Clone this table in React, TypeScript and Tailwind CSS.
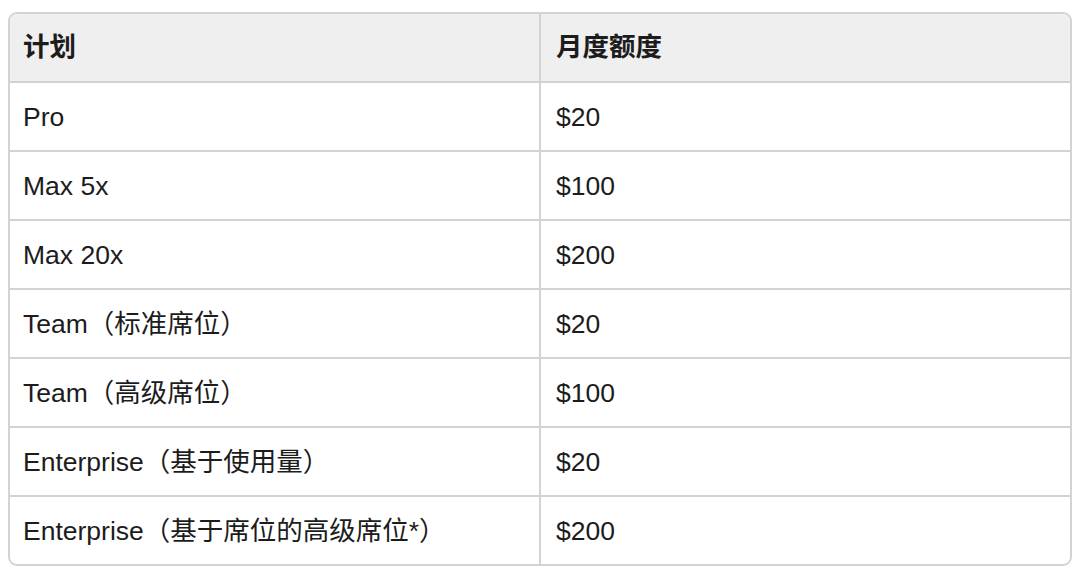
import React from "react";

const rows: [string, string][] = [
  ["Pro", "$20"],
  ["Max 5x", "$100"],
  ["Max 20x", "$200"],
  ["Team（标准席位）", "$20"],
  ["Team（高级席位）", "$100"],
  ["Enterprise（基于使用量）", "$20"],
  ["Enterprise（基于席位的高级席位*）", "$200"],
];

export default function App() {
  return (
    <div
      className="w-[1080px] h-[575px] bg-white pt-[12px] pl-[8px] pr-[8px]"
      style={{ fontFamily: '"Liberation Sans", "Noto Sans CJK SC", sans-serif' }}
    >
      <div className="w-[1064px] rounded-[9px] border-[2px] border-[#d3d3d3] overflow-hidden text-[#1c1c1c] text-[26.5px]">
        <div className="grid grid-cols-[531px_1fr] h-[67px] bg-[#efefef] font-bold">
          <div className="flex items-center pl-[13px] border-r-[2px] border-[#d3d3d3]">计划</div>
          <div className="flex items-center pl-[15px]">月度额度</div>
        </div>
        {rows.map(([a, b]) => (
          <div key={a} className="grid grid-cols-[531px_1fr] h-[69px] border-t-[2px] border-[#d3d3d3]">
            <div className="flex items-center pl-[13px] pt-[2px] border-r-[2px] border-[#d3d3d3]">{a}</div>
            <div className="flex items-center pl-[15px] pt-[2px]">{b}</div>
          </div>
        ))}
      </div>
    </div>
  );
}
